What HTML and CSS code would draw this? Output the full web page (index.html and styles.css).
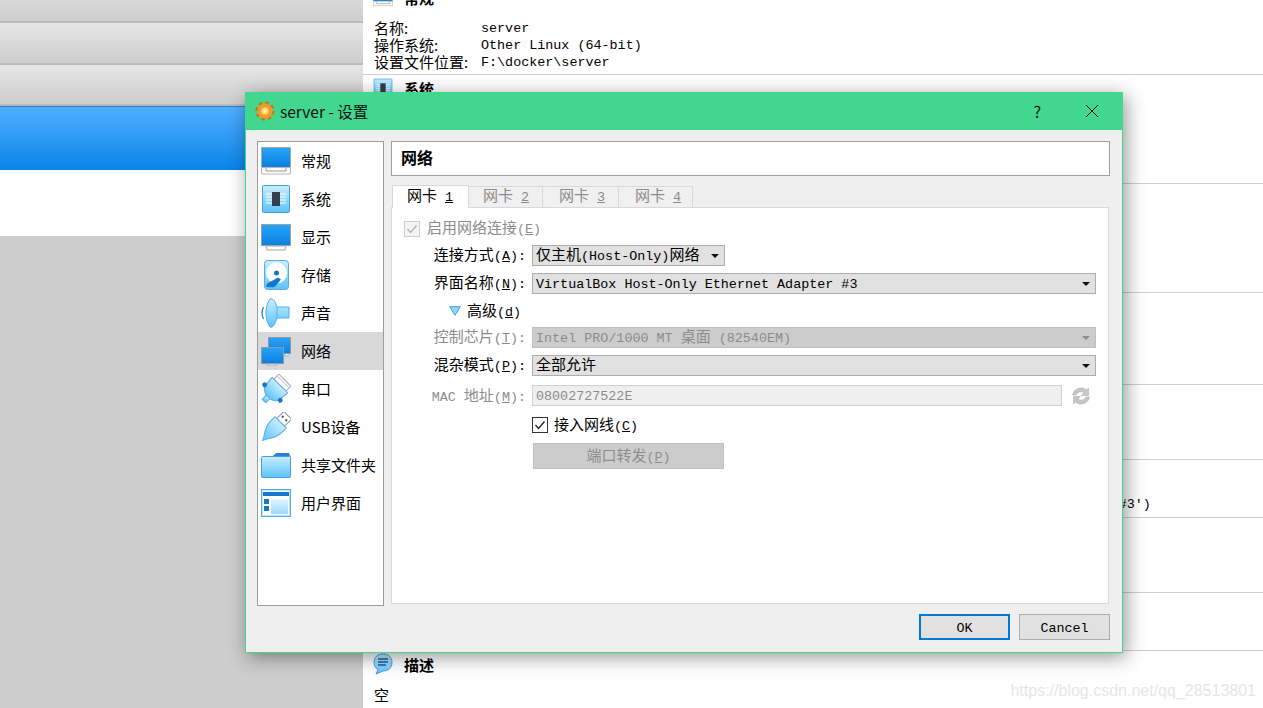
FILE: index.html
```html
<!DOCTYPE html>
<html lang="zh-CN">
<head>
    <meta charset="UTF-8">
    <title>server - 设置</title>
    <link rel="stylesheet" href="styles.css">
</head>
<body>
    <!-- Shared icons -->
    <svg class="icon-defs" aria-hidden="true">
        <defs>
            <linearGradient id="screen" x1="0" y1="0" x2="0" y2="1">
                <stop offset="0" stop-color="#27a5f6"/>
                <stop offset="1" stop-color="#0a7fe2"/>
            </linearGradient>
            <linearGradient id="light" x1="0" y1="0" x2="0" y2="1">
                <stop offset="0" stop-color="#c8eeff"/>
                <stop offset="1" stop-color="#5cc3fb"/>
            </linearGradient>
        </defs>
        <symbol id="i-general" viewBox="0 0 30 30">
            <rect x="0.5" y="1.5" width="29" height="20" fill="url(#screen)" stroke="#a8a8a8"/>
            <path d="M0.5 21.5v6.5h29v-6.5z" fill="#fff" stroke="#b8b8b8"/>
            <path d="M5 22v3h20v-3" fill="none" stroke="#9a9a9a"/>
        </symbol>
        <symbol id="i-system" viewBox="0 0 30 30">
            <rect x="1.5" y="1.5" width="27" height="27" rx="1" fill="url(#light)" stroke="#4a9de0"/>
            <path d="M5 10h20M5 13h20M5 16h20M5 19h20" stroke="#fff"/>
            <rect x="11" y="8" width="8" height="14" fill="#333d4d"/>
        </symbol>
        <symbol id="i-display" viewBox="0 0 30 30">
            <rect x="0.5" y="2.5" width="29" height="21" fill="url(#screen)" stroke="#a0a0a0"/>
            <path d="M5 24l1 4h18l1-4z" fill="#fff" stroke="#a8a8a8"/>
        </symbol>
        <symbol id="i-storage" viewBox="0 0 30 30">
            <rect x="3.5" y="0.5" width="24" height="29" rx="3" fill="url(#light)" stroke="#5ea9e8"/>
            <circle cx="15.5" cy="13" r="10.5" fill="#fff"/>
            <circle cx="15.5" cy="13" r="2.5" fill="#1676cf"/>
            <path d="M5 26.5c0-2 1-3 3-4l9-5 3 2-5 6c-2 2-4 2.500-10 1z" fill="#1676cf"/>
        </symbol>
        <symbol id="i-audio" viewBox="0 0 30 30">
            <path d="M9 1C6 5 5 10 5 15s1 10 4 14c3 1 5-3 7-9h12V9H16C14 3 12 0 9 1z" fill="url(#light)" stroke="#55aef0"/>
            <path d="M16 9v11" fill="none" stroke="#55aef0"/>
            <path d="M2.500 9c-2 4-2 8 0 12" fill="none" stroke="#1676cf" stroke-width="1.200"/>
        </symbol>
        <symbol id="i-network" viewBox="0 0 30 30">
            <path d="M24 17v3h4" fill="#fff" stroke="#9aa8b4"/>
            <rect x="7.500" y="1.500" width="22" height="16" fill="url(#screen)" stroke="#8d9aa6"/>
            <path d="M6 27v2h10v-2" fill="#fff" stroke="#9aa8b4"/>
            <rect x="0.500" y="11.500" width="22" height="16" fill="url(#screen)" stroke="#8d9aa6"/>
        </symbol>
        <symbol id="i-serial" viewBox="0 0 30 30">
            <g transform="rotate(45 15 15)">
                <rect x="6.500" y="2.500" width="17" height="7" fill="#fff" stroke="#aaa"/>
                <path d="M6.500 5h17" stroke="#ccc"/>
                <path d="M4 9.500h22l-1 11c-1 3-5 6-10 6s-9-3-10-6z" fill="url(#light)" stroke="#55aef0"/>
                <rect x="12.500" y="26" width="5" height="6" fill="url(#light)" stroke="#55aef0"/>
                <circle cx="4" cy="20" r="2.400" fill="#1676cf"/>
                <circle cx="26" cy="20" r="2.400" fill="#1676cf"/>
            </g>
        </symbol>
        <symbol id="i-usb" viewBox="0 0 30 30">
            <g transform="rotate(45 15 15)">
                <rect x="9.500" y="-1.500" width="11" height="10" fill="#fff" stroke="#999"/>
                <rect x="11.500" y="2" width="2" height="2" fill="#555"/>
                <rect x="16.500" y="2" width="2" height="2" fill="#555"/>
                <path d="M7 8.500h16v6.500c0 6-3 11-6 15l-2 4-2-4c-3-4-6-9-6-15z" fill="url(#light)" stroke="#55aef0"/>
            </g>
        </symbol>
        <symbol id="i-folder" viewBox="0 0 30 30">
            <path d="M11 7l4-4h13l1.500 4z" fill="#2a7fd4"/>
            <rect x="0.500" y="6.500" width="29" height="21" rx="1" fill="url(#light)" stroke="#4a9de0"/>
        </symbol>
        <symbol id="i-ui" viewBox="0 0 30 30">
            <rect x="0.500" y="1.500" width="29" height="27" fill="#bfe8fb" stroke="#5aa9e6"/>
            <rect x="2" y="3" width="26" height="24" fill="#fff"/>
            <rect x="2" y="4" width="26" height="4" fill="#1676cf"/>
            <rect x="3" y="11" width="5" height="5" fill="#1676cf"/>
            <rect x="3" y="18" width="5" height="5" fill="#1676cf"/>
            <rect x="10" y="11" width="17" height="15" fill="url(#light)" opacity="0.600"/>
        </symbol>
        <symbol id="i-gear" viewBox="0 0 20 20">
            <circle cx="10" cy="10" r="8" fill="none" stroke="#c9761a" stroke-width="3.500" stroke-dasharray="3.300 3"/>
            <circle cx="10" cy="10" r="7.500" fill="#f59a23"/>
            <circle cx="10" cy="10" r="3.800" fill="#ffd36e"/>
            <circle cx="10" cy="10" r="1.800" fill="#fff1c4"/>
        </symbol>
        <symbol id="i-refresh" viewBox="0 0 20 20">
            <path d="M1.500 9a8.500 8.500 0 0 1 14-5l2-2v7.500h-7l2.500-2.500a5 5 0 0 0-8 2z" fill="#c6c6c6" stroke="#b4b4b4" stroke-width="0.600"/>
            <path d="M18.500 11a8.500 8.500 0 0 1-14 5l-2 2v-7.500h7l-2.500 2.500a5 5 0 0 0 8-2z" fill="#c6c6c6" stroke="#b4b4b4" stroke-width="0.600"/>
        </symbol>
        <symbol id="i-note" viewBox="0 0 20 22">
            <path d="M10 1c5 0 9 3 9 8.500S15 18 10 18l-7 3 2-4.500C2 15 1 12 1 9.500 1 4 5 1 10 1z" fill="url(#light)" stroke="#4a9de0"/>
            <path d="M5 6h10M5 9h10M5 12h8" stroke="#1f5f9e" stroke-width="1.500"/>
        </symbol>
    </svg>

    <div class="desktop">
        <!-- VM list on the left -->
        <div class="vm-list">
            <div class="vm-tile"></div>
            <div class="vm-tile"></div>
            <div class="vm-tile"></div>
            <div class="vm-selected"></div>
            <div class="vm-blank"></div>
        </div>

        <!-- Details on the right, mostly behind the dialog -->
        <div class="details">
            <section class="sec">
                <h3 class="sec-head"><svg class="sec-icon"><use href="#i-general"/></svg><span class="cn">常规</span></h3>
                <div class="info">
                    <span class="cn">名称:</span><span>server</span>
                    <span class="cn">操作系统:</span><span>Other Linux (64-bit)</span>
                    <span class="cn">设置文件位置:</span><span>F:\docker\server</span>
                </div>
            </section>
            <section class="sec">
                <h3 class="sec-head"><svg class="sec-icon"><use href="#i-system"/></svg><span class="cn">系统</span></h3>
            </section>
            <section class="sec"></section>
            <section class="sec"></section>
            <section class="sec"></section>
            <section class="sec">
                <h3 class="sec-head"><svg class="sec-icon"><use href="#i-network"/></svg><span class="cn">网络</span></h3>
                <div class="info info-short">
                    <span class="cn">网卡 1:</span><span>Intel PRO/1000 MT <span class="cn">桌面</span> (<span class="cn">仅主机</span>(Host-Only)<span class="cn">网络</span>, 'VirtualBox Host-Only Ethernet Adapter #3')</span>
                </div>
            </section>
            <section class="sec"></section>
            <section class="sec"></section>
            <section class="sec sec-last">
                <h3 class="sec-head"><svg class="sec-icon"><use href="#i-note"/></svg><span class="cn">描述</span></h3>
                <div class="note"><span class="cn">空</span></div>
            </section>
        </div>
    </div>

    <!-- Settings dialog -->
    <div class="dialog">
        <div class="titlebar">
            <svg class="title-icon"><use href="#i-gear"/></svg>
            <span class="title-text">server - 设置</span>
            <span class="title-help">?</span>
            <svg class="title-close" viewBox="0 0 14 14"><path d="M1 1l12 12M13 1L1 13" stroke="#111" fill="none"/></svg>
        </div>

        <div class="dialog-body">
            <ul class="side">
                <li class="side-item"><svg class="side-icon"><use href="#i-general"/></svg>常规</li>
                <li class="side-item"><svg class="side-icon"><use href="#i-system"/></svg>系统</li>
                <li class="side-item"><svg class="side-icon"><use href="#i-display"/></svg>显示</li>
                <li class="side-item"><svg class="side-icon"><use href="#i-storage"/></svg>存储</li>
                <li class="side-item"><svg class="side-icon"><use href="#i-audio"/></svg>声音</li>
                <li class="side-item active"><svg class="side-icon"><use href="#i-network"/></svg>网络</li>
                <li class="side-item"><svg class="side-icon"><use href="#i-serial"/></svg>串口</li>
                <li class="side-item"><svg class="side-icon"><use href="#i-usb"/></svg>USB设备</li>
                <li class="side-item"><svg class="side-icon"><use href="#i-folder"/></svg>共享文件夹</li>
                <li class="side-item"><svg class="side-icon"><use href="#i-ui"/></svg>用户界面</li>
            </ul>

            <div class="main">
                <div class="page-title">网络</div>

                <div class="tabs">
                    <div class="tab active"><span class="cn">网卡</span> <u>1</u></div>
                    <div class="tab"><span class="cn">网卡</span> <u>2</u></div>
                    <div class="tab"><span class="cn">网卡</span> <u>3</u></div>
                    <div class="tab"><span class="cn">网卡</span> <u>4</u></div>
                </div>

                <div class="panel">
                    <div class="form">
                        <label class="row-wide enable off">
                            <span class="check check-off"><svg viewBox="0 0 14 14"><path d="M2.500 7l3 3.500 6-7" fill="none" stroke="#b5b5b5" stroke-width="1.300"/></svg></span>
                            <span><span class="cn">启用网络连接</span>(<u>E</u>)</span>
                        </label>

                        <span class="lbl"><span class="cn">连接方式</span>(<u>A</u>):</span>
                        <div class="combo combo-short"><span><span class="cn">仅主机</span>(Host-Only)<span class="cn">网络</span></span><i class="arrow"></i></div>

                        <span class="lbl"><span class="cn">界面名称</span>(<u>N</u>):</span>
                        <div class="combo"><span>VirtualBox Host-Only Ethernet Adapter #3</span><i class="arrow"></i></div>

                        <div class="row-wide advanced">
                            <svg class="adv-arrow" viewBox="0 0 12 10"><path d="M0.700 0.700h10.600L6 9.300z" fill="#8fd8fb" stroke="#3f9fe6"/></svg>
                            <span><span class="cn">高级</span>(<u>d</u>)</span>
                        </div>

                        <span class="lbl off"><span class="cn">控制芯片</span>(<u>T</u>):</span>
                        <div class="combo combo-off"><span>Intel PRO/1000 MT <span class="cn">桌面</span> (82540EM)</span><i class="arrow"></i></div>

                        <span class="lbl"><span class="cn">混杂模式</span>(<u>P</u>):</span>
                        <div class="combo"><span><span class="cn">全部允许</span></span><i class="arrow"></i></div>

                        <span class="lbl lbl-low off">MAC <span class="cn">地址</span>(<u>M</u>):</span>
                        <div class="mac-row">
                            <div class="mac-input">08002727522E</div>
                            <svg class="mac-refresh"><use href="#i-refresh"/></svg>
                        </div>

                        <label class="cable">
                            <span class="check"><svg viewBox="0 0 14 14"><path d="M2.500 7l3 3.500 6-7" fill="none" stroke="#222" stroke-width="1.300"/></svg></span>
                            <span><span class="cn">接入网线</span>(<u>C</u>)</span>
                        </label>

                        <div class="port-btn"><span class="cn">端口转发</span>(<u>P</u>)</div>
                    </div>
                </div>
            </div>
        </div>

        <div class="dialog-foot">
            <button class="btn btn-default">OK</button>
            <button class="btn">Cancel</button>
        </div>
    </div>

    <div class="watermark">https://blog.csdn.net/qq_28513801</div>
</body>
</html>
```

FILE: styles.css
```css
* {
    box-sizing: border-box;
}

html, body {
    height: 100%;
}

body {
    margin: 0;
    overflow: hidden;
    background: #fff;
    color: #000;
    font-family: "Liberation Mono", "Noto Sans CJK SC", monospace;
    font-size: 13.4px;
}

.cn {
    font-family: "Noto Sans CJK SC", sans-serif;
    font-size: 15px;
    line-height: 1;
}

.icon-defs {
    position: absolute;
    width: 0;
    height: 0;
}

.desktop {
    display: grid;
    grid-template-columns: 363px 1fr;
    height: 708px;
    overflow: hidden;
}

/* VM list */
.vm-list {
    display: grid;
    grid-template-rows: 42px 42px 41px 64px 66px 1fr;
    margin-top: -19px;
    height: 727px;
    background: #cdcdcd;
}

.vm-tile {
    background: linear-gradient(to bottom, #e6e6e6, #cdcdcd);
    border-bottom: 2px solid #bababa;
}

.vm-selected {
    background: linear-gradient(to bottom, #4fb0ff, #0a84e8);
    border-top: 1px solid #2b7fc8;
}

.vm-blank {
    background: #fff;
}

/* Details */
.details {
    display: grid;
    grid-template-rows: 89px 109px 109px 92px 75px 58px 75px 58px 1fr;
    margin-top: -14px;
    height: 722px;
}

.sec {
    border-bottom: 1px solid #cfcfcf;
    padding-left: 10px;
    overflow: hidden;
}

.sec-last {
    border-bottom: none;
}

.sec-head {
    display: flex;
    align-items: center;
    height: 28px;
    margin: -1px 0 7px;
    font-weight: bold;
}

.sec:first-child .sec-head {
    margin: -3px 0 9px;
}

.sec-icon {
    width: 20px;
    height: 22px;
    margin-right: 11px;
}

.info {
    display: grid;
    grid-template-columns: 107px 1fr;
    grid-auto-rows: 17px;
    align-items: start;
    padding-left: 1px;
    line-height: 17px;
    white-space: nowrap;
}

.info-short {
    grid-template-columns: 61px 1fr;
}

.note {
    padding: 2px 0 0 1px;
    line-height: 17px;
}

/* Dialog */
.dialog {
    position: absolute;
    left: 245px;
    top: 92px;
    width: 878px;
    height: 561px;
    display: flex;
    flex-direction: column;
    background: #efefef;
    border: 1px solid #41d78f;
    box-shadow: 3px 4px 18px rgba(0, 0, 0, 0.42);
}

.titlebar {
    display: flex;
    align-items: center;
    flex: none;
    height: 37px;
    padding: 0 0 2px 9px;
    background: #41d78f;
    font-family: "Noto Sans CJK SC", sans-serif;
    font-size: 15.5px;
    color: #111;
}

.title-icon {
    width: 20px;
    height: 20px;
    margin-right: 5px;
}

.title-text {
    flex: 1;
}

.title-help {
    margin-right: 44px;
    font-size: 16px;
}

.title-close {
    width: 14px;
    height: 14px;
    margin-right: 23px;
}

.dialog-body {
    display: grid;
    grid-template-columns: 127px 1fr;
    gap: 7px;
    height: 476px;
    padding: 11px 12px 0 11px;
}

.side {
    margin: 0;
    padding: 0;
    list-style: none;
    background: #fff;
    border: 1px solid #9c9c9c;
    font-family: "Noto Sans CJK SC", sans-serif;
    font-size: 15px;
}

.side-item {
    display: flex;
    align-items: center;
    height: 38px;
    padding: 0 0 2px 3px;
}

.side-item.active {
    background: #d8d8d8;
}

.side-icon {
    width: 30px;
    height: 30px;
    margin: 2px 10px 0 0;
    overflow: visible;
}

.main {
    display: flex;
    flex-direction: column;
}

.page-title {
    flex: none;
    height: 35px;
    padding-left: 9px;
    background: #fff;
    border: 1px solid #a0a0a0;
    font-family: "Noto Sans CJK SC", sans-serif;
    font-size: 16px;
    font-weight: bold;
    line-height: 31px;
}

.tabs {
    display: flex;
    align-items: flex-end;
    flex: none;
    height: 23px;
    margin: 8px 0 0 1px;
}

.tab {
    width: 74px;
    height: 21px;
    padding-left: 14px;
    background: #f0f0f0;
    border: 1px solid #d9d9d9;
    border-bottom: none;
    border-left: none;
    color: #8c8c8c;
    line-height: 19px;
    white-space: pre;
}

.tab:nth-child(3) {
    width: 76px;
    padding-left: 16px;
}

.tab:nth-child(4) {
    padding-left: 16px;
}

.tab.active {
    width: 77px;
    height: 23px;
    background: #fff;
    border-left: 1px solid #d9d9d9;
    color: #000;
    line-height: 23px;
    margin-bottom: -1px;
    position: relative;
}

.panel {
    flex: 1;
    margin: 0 1px 2px 0;
    background: #fff;
    border: 1px solid #d9d9d9;
}

.form {
    display: grid;
    grid-template-columns: 134px 1fr;
    grid-template-rows: 27px 28px 27px 27px 28px 30px 29px 29px 26px;
    column-gap: 6px;
    margin-top: 10px;
    padding-right: 12px;
    line-height: 23px;
    white-space: pre;
}

.row-wide {
    grid-column: 1 / -1;
    display: flex;
    align-items: flex-start;
}

.enable {
    gap: 7px;
    padding-left: 12px;
}

.off {
    color: #8c8c8c;
}

.lbl {
    text-align: right;
}

.lbl-low {
    padding-top: 1px;
}

.check {
    display: flex;
    flex: none;
    width: 16px;
    height: 16px;
    margin-top: 3px;
    background: #fff;
    border: 1px solid #333;
}

.check-off {
    border-color: #cfcfcf;
    background: #f4f4f4;
}

.combo {
    display: flex;
    align-items: center;
    justify-content: space-between;
    height: 21px;
    padding: 1px 5px 0 3px;
    background: #e1e1e1;
    border: 1px solid #adadad;
}

.combo-short {
    width: 193px;
}

.combo-off {
    background: #ccc;
    border-color: #bfbfbf;
    color: #8c8c8c;
}

.arrow {
    width: 0;
    height: 0;
    border-left: 4px solid transparent;
    border-right: 4px solid transparent;
    border-top: 4px solid #111;
}

.combo-off .arrow {
    border-top-color: #8c8c8c;
}

.advanced {
    gap: 6px;
    padding-left: 57px;
    line-height: 25px;
}

.adv-arrow {
    width: 12px;
    height: 10px;
    margin-top: 6px;
}

.mac-row {
    display: flex;
    align-items: center;
    height: 21px;
    margin-right: 5px;
}

.mac-input {
    flex: 1;
    height: 21px;
    padding-left: 3px;
    background: #efefef;
    border: 1px solid #d0d0d0;
    color: #8c8c8c;
    line-height: 21px;
}

.mac-refresh {
    width: 20px;
    height: 20px;
    margin-left: 9px;
}

.cable {
    grid-column: 2;
    display: flex;
    gap: 6px;
    line-height: 25px;
}

.port-btn {
    grid-column: 2;
    width: 191px;
    height: 26px;
    margin-left: 1px;
    background: #ccc;
    border: 1px solid #bfbfbf;
    color: #8c8c8c;
    line-height: 27px;
    text-align: center;
}

.dialog-foot {
    display: flex;
    justify-content: flex-end;
    gap: 9px;
    padding: 8px 12px 0 0;
}

.btn {
    width: 91px;
    height: 26px;
    padding: 2px 0 0;
    background: #e1e1e1;
    border: 1px solid #adadad;
    color: #000;
    font: inherit;
}

.btn-default {
    border: 2px solid #0078d7;
}

.watermark {
    position: absolute;
    right: 7px;
    bottom: 8px;
    color: #e6e6e6;
    font-family: "Liberation Sans", sans-serif;
    font-size: 16px;
}
```
